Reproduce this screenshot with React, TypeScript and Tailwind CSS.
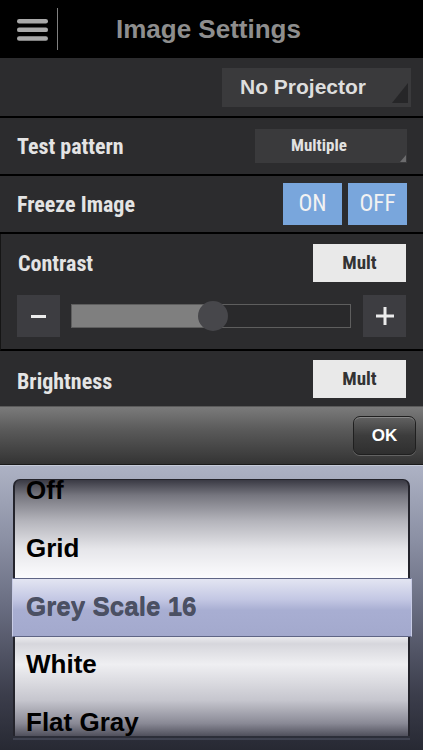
import React from 'react';

const narrow = "font-['Liberation_Sans_Narrow','Roboto_Condensed','DejaVu_Sans_Condensed','Liberation_Sans',sans-serif]";

const pickerItems = ['Off', 'Grid', 'Grey Scale 16', 'White', 'Flat Gray'];

function Hamburger() {
  return (
    <svg width="31" height="22" viewBox="0 0 31 22">
      <rect x="0" y="0" width="31" height="4.5" rx="2.2" fill="#a9a9a9" />
      <rect x="0" y="8.6" width="31" height="4.5" rx="2.2" fill="#a9a9a9" />
      <rect x="0" y="17.2" width="31" height="4.5" rx="2.2" fill="#a9a9a9" />
    </svg>
  );
}

function MultButton() {
  return (
    <div className={`w-[93px] h-[38px] bg-[#e9e9e9] flex items-center justify-center text-[19px] font-bold text-[#333] ${narrow}`}>
      Mult
    </div>
  );
}

export default function App() {
  return (
    <div className="w-[423px] h-[750px] overflow-hidden bg-black flex flex-col font-['Liberation_Sans',sans-serif]">
      {/* header */}
      <header className="h-[58px] shrink-0 flex items-center bg-black">
        <div className="ml-[17px] mt-[1px] flex items-center">
          <Hamburger />
        </div>
        <div className="ml-[9px] w-px h-[42px] bg-[#808080]" />
        <h1 className="ml-[58px] text-[26px] font-bold text-[#8e8e8e] leading-none">Image Settings</h1>
      </header>

      {/* projector */}
      <div className="h-[60px] shrink-0 bg-[#2c2c2e] flex items-center justify-end pr-[12px] border-b-2 border-black">
        <div className="relative w-[189px] h-[39px] bg-[#3a3a3c] flex items-center pl-[18px] text-[21px] font-bold text-[#dedede]">
          No Projector
          <div className="absolute right-[3px] bottom-[4px] w-0 h-0 border-l-[16px] border-l-transparent border-b-[20px] border-b-[#262628]" />
        </div>
      </div>

      {/* test pattern */}
      <div className="h-[58px] shrink-0 bg-[#2c2c2e] flex items-center justify-between pl-[17px] pr-[16px] border-b-2 border-black">
        <span className={`text-[22px] font-bold text-[#e4e4e4] ${narrow}`}>Test pattern</span>
        <div className={`relative w-[152px] h-[34px] bg-[#3a3a3c] flex items-center justify-center pr-[24px] text-[17px] font-bold text-[#e2e2e2] ${narrow}`}>
          Multiple
          <div className="absolute right-[1px] bottom-[1px] w-0 h-0 border-l-[6px] border-l-transparent border-b-[7px] border-b-[#6c6c6e]" />
        </div>
      </div>

      {/* freeze */}
      <div className="h-[58px] shrink-0 bg-[#2c2c2e] flex items-center justify-between pl-[17px] pr-[16px] border-b-2 border-black">
        <span className={`text-[22px] font-bold text-[#e4e4e4] ${narrow}`}>Freeze Image</span>
        <div className="flex gap-[6px]">
          <div className={`w-[59px] h-[42px] bg-[#79a6dc] flex items-center justify-center text-[23px] text-[#f2f2f2] ${narrow}`}>ON</div>
          <div className={`w-[59px] h-[42px] bg-[#79a6dc] flex items-center justify-center text-[23px] text-[#f2f2f2] ${narrow}`}>OFF</div>
        </div>
      </div>

      {/* contrast */}
      <div className="h-[117px] shrink-0 bg-[#2c2c2e] flex flex-col pl-[16px] pr-[17px] pt-[10px] border-b-2 border-black border-l border-l-[#151515]">
        <div className="flex items-center justify-between">
          <span className={`pl-[1px] text-[22px] font-bold text-[#e4e4e4] ${narrow}`}>Contrast</span>
          <MultButton />
        </div>
        <div className="mt-[13px] flex items-center">
          <div className="w-[43px] h-[42px] bg-[#3d3d41] flex items-center justify-center">
            <div className="w-[15px] h-[3px] bg-[#ececec]" />
          </div>
          <div className="relative ml-[11px] w-[282px] h-[24px] border border-[#5e5e5e] bg-[#29292b]">
            <div className="w-[137px] h-full bg-[#7f7f7f]" />
            <div className="absolute left-[126px] top-[-4px] w-[30px] h-[30px] rounded-full bg-[#47474b]" />
          </div>
          <div className="ml-[12px] w-[43px] h-[42px] bg-[#3d3d41] flex items-center justify-center">
            <svg width="18" height="18" viewBox="0 0 18 18">
              <rect x="0" y="7.5" width="18" height="3" fill="#ececec" />
              <rect x="7.5" y="0" width="3" height="18" fill="#ececec" />
            </svg>
          </div>
        </div>
      </div>

      {/* brightness */}
      <div className="h-[55px] shrink-0 bg-[#2c2c2e] flex items-start justify-between pl-[17px] pr-[17px] pt-[9px]">
        <span className={`mt-[5px] text-[22px] font-bold text-[#e4e4e4] ${narrow}`}>Brightness</span>
        <MultButton />
      </div>

      {/* toolbar */}
      <div className="h-[59px] shrink-0 flex items-center justify-end pr-[7px] border-t border-[#5a5a5a] border-b border-b-[#1a1a1a] bg-[linear-gradient(to_bottom,#7b7b7b,#5a5a5a_40%,#3a3a3a_90%,#333333)]">
        <div className="w-[63px] h-[39px] rounded-[7px] border border-[#1f1f1f] bg-[linear-gradient(to_bottom,#626262,#3c3c3c_50%,#2f2f2f)] shadow-[inset_0_1px_0_rgba(255,255,255,0.25),0_1px_0_rgba(255,255,255,0.2)] flex items-center justify-center text-[17px] font-bold text-white">
          OK
        </div>
      </div>

      {/* picker */}
      <div className="relative flex-1 border-t border-[#c6cbd9] bg-[linear-gradient(to_bottom,#adb2c4,#8c91a5_25%,#686c80_50%,#3c3e4c_80%,#272933)]">
        <div className="mt-[13px] mx-[13px] h-[257px] rounded-t-[7px] overflow-hidden border-x-2 border-t border-[#24242c] bg-[linear-gradient(to_bottom,#3a3a44,#76767f_6%,#b4b4bb_16%,#e6e6ea_27%,#fbfbfd_38%,#f4f4f6_60%,#d6d6dc_64%,#efeff2_72%,#c6c6ce_86%,#8a8a96_95%,#50505c)]">
          <div className="relative z-10 -mt-[19px]">
            {pickerItems.map((item, i) => (
              <div
                key={item}
                className={`h-[58px] flex items-center pl-[11px] text-[26px] font-bold ${i === 2 ? 'text-[#4b5063]' : 'text-black'}`}
              >
                {item}
              </div>
            ))}
          </div>
        </div>
        <div className="absolute left-[12px] right-[11px] top-[112px] h-[59px] border-y border-[#5f6585] border-x border-x-[#c8cce6] bg-[linear-gradient(to_bottom,#e3e5f2,#c4c8e4_35%,#a8aed2_55%,#a3a9cd)]">
          <div className="h-full flex items-center pl-[13px] text-[26px] font-bold text-[#4b5063]">Grey Scale 16</div>
        </div>
        <div className="mx-[13px] h-[2px] mt-[2px] bg-[#3f4250]" />
      </div>
    </div>
  );
}
